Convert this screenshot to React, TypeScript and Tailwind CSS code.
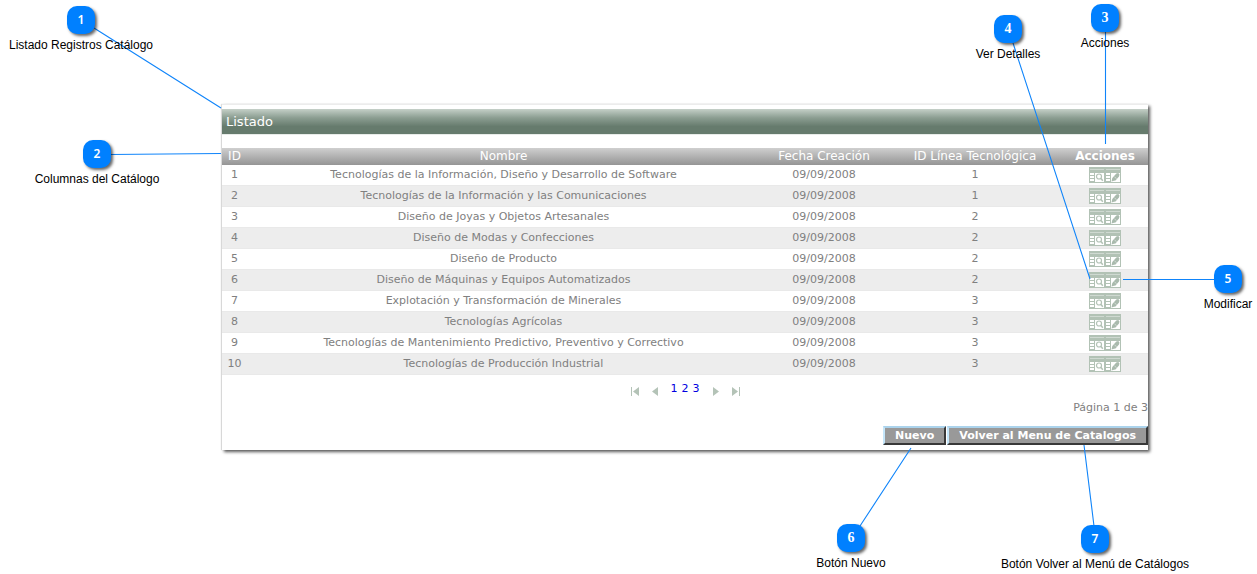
import React from "react";

type Row = { id: number; name: string; date: string; line: number };

const rows: Row[] = [
  { id: 1, name: "Tecnologías de la Información, Diseño y Desarrollo de Software", date: "09/09/2008", line: 1 },
  { id: 2, name: "Tecnologías de la Información y las Comunicaciones", date: "09/09/2008", line: 1 },
  { id: 3, name: "Diseño de Joyas y Objetos Artesanales", date: "09/09/2008", line: 2 },
  { id: 4, name: "Diseño de Modas y Confecciones", date: "09/09/2008", line: 2 },
  { id: 5, name: "Diseño de Producto", date: "09/09/2008", line: 2 },
  { id: 6, name: "Diseño de Máquinas y Equipos Automatizados", date: "09/09/2008", line: 2 },
  { id: 7, name: "Explotación y Transformación de Minerales", date: "09/09/2008", line: 3 },
  { id: 8, name: "Tecnologías Agrícolas", date: "09/09/2008", line: 3 },
  { id: 9, name: "Tecnologías de Mantenimiento Predictivo, Preventivo y Correctivo", date: "09/09/2008", line: 3 },
  { id: 10, name: "Tecnologías de Producción Industrial", date: "09/09/2008", line: 3 },
];

function GridIcon({ children }: { children: React.ReactNode }) {
  return (
    <svg width="16" height="16" viewBox="0 0 16 16" aria-hidden="true" className="block">
      <rect width="16" height="16" fill="#b2c2b5" />
      <rect x="1" y="2" width="14" height="1" fill="#cfd9d1" />
      <path d="M1 6h4v2H1zM1 9h4v2H1zM1 12h4v2H1zM6 6h9v9H6z" fill="#fff" />
      {children}
    </svg>
  );
}

function DetailIcon() {
  return (
    <GridIcon>
      <circle cx="10" cy="9.5" r="2.5" fill="none" stroke="#b2c2b5" strokeWidth="1.2" />
      <path d="M11.8 11.3l2 2.400" stroke="#b2c2b5" strokeWidth="1.500" />
    </GridIcon>
  );
}

function EditIcon() {
  return (
    <GridIcon>
      <path d="M6.500 14.500l.8-3.500 4-4.500 2-.5 1.200 1.500-.5 2-3.500 4-1.500.3z" fill="#a9baad" />
      <path d="M9.500 10l2 1.500" stroke="#e4eae5" strokeWidth=".7" />
    </GridIcon>
  );
}

type PagerKind = "first" | "prev" | "next" | "last";

const pagerPaths: Record<PagerKind, string> = {
  first: "M0 0h1v9H0zM8 0v9L2 4.500z",
  prev: "M7 0v9L1 4.500z",
  next: "M1 0v9l6-4.500z",
  last: "M0 0v9l6-4.500zM7 0h1v9H7z",
};

function PagerButton({ kind, label }: { kind: PagerKind; label: string }) {
  return (
    <button type="button" aria-label={label} className="mt-1 block">
      <svg width="8" height="9" viewBox="0 0 8 9" className="block">
        <path d={pagerPaths[kind]} fill="#b4c3b7" />
      </svg>
    </button>
  );
}

function Callout({ n, label, place, serif }: { n: number; label: string; place: string; serif?: boolean }) {
  return (
    <div className={`absolute flex w-60 -translate-x-1/2 flex-col items-center ${place}`}>
      <span
        className={`flex size-7 items-center justify-center rounded-[10px] bg-[#0080ff] text-white shadow-[2px_2px_3px_rgba(0,0,0,0.6)] ${
          serif ? "font-['Liberation_Serif',serif] text-sm font-bold" : "font-['Noto_Sans',sans-serif] text-xs font-semibold"
        }`}
      >
        {n}
      </span>
      <span className="mt-1 text-xs leading-[14px] whitespace-nowrap">{label}</span>
    </div>
  );
}

const buttonStyle =
  "h-[19px] border-2 border-t-[#abd3ec] border-l-[#c5e6fa] border-r-[#383838] border-b-[#383838] bg-[#999] px-2.5 text-[11px] leading-[15px] font-bold text-white";

const cell = "border-b border-[#e9e9e9] p-0";

export default function App() {
  return (
    <main className="relative min-h-[574px] overflow-hidden bg-white pt-[104px] pr-[109px] pb-[124px] pl-[222px] font-['Liberation_Sans',Arial,sans-serif] text-black">
      <section className="border-t border-[#ececec] bg-white pt-1 pb-[5px] font-['DejaVu_Sans',Verdana,sans-serif] text-[#808080] shadow-[2px_2px_3px_rgba(0,0,0,0.65),-1px_0_1px_rgba(0,0,0,0.12)]">
        <h1 className="h-[25px] bg-linear-to-b from-[#c5d0c8] via-[#8c9e92] via-35% to-[#667b6d] to-70% px-1 text-[13px] leading-[25px] text-white">
          Listado
        </h1>
        <div className="mb-[13px] h-px bg-[#e8ece9]" />
        <table className="w-full table-fixed border-separate border-spacing-0 text-center text-[11px]">
          <colgroup>
            <col className="w-[25px]" />
            <col />
            <col className="w-[128px]" />
            <col className="w-[174px]" />
            <col className="w-[86px]" />
          </colgroup>
          <thead>
            <tr className="h-[17px] bg-linear-to-b from-[#cfcfcf] to-[#959595] text-xs leading-[17px] text-white">
              <th className="p-0 font-normal">ID</th>
              <th className="p-0 font-normal">Nombre</th>
              <th className="p-0 font-normal">Fecha Creación</th>
              <th className="p-0 font-normal">ID Línea Tecnológica</th>
              <th className="p-0 font-bold">Acciones</th>
            </tr>
          </thead>
          <tbody>
            {rows.map((row) => (
              <tr key={row.id} className="h-[21px] leading-5 even:bg-[#ededed]">
                <td className={cell}>{row.id}</td>
                <td className={cell}>{row.name}</td>
                <td className={cell}>{row.date}</td>
                <td className={cell}>{row.line}</td>
                <td className={cell}>
                  <div className="flex justify-center">
                    <button type="button" aria-label={`Ver detalles ${row.id}`}>
                      <DetailIcon />
                    </button>
                    <button type="button" aria-label={`Modificar ${row.id}`}>
                      <EditIcon />
                    </button>
                  </div>
                </td>
              </tr>
            ))}
          </tbody>
        </table>
        <nav aria-label="Páginas" className="mt-1.5 flex items-center justify-center gap-3 text-[11px] leading-4">
          <PagerButton kind="first" label="Primera página" />
          <PagerButton kind="prev" label="Página anterior" />
          <span className="flex gap-1 text-[#0000e0]">
            <a href="#1">1</a>
            <a href="#2">2</a>
            <a href="#3">3</a>
          </span>
          <PagerButton kind="next" label="Página siguiente" />
          <PagerButton kind="last" label="Última página" />
        </nav>
        <p className="mt-[3px] text-right text-[11px] leading-4">Página 1 de 3</p>
        <div className="mt-[10px] flex justify-end gap-px">
          <button type="button" className={buttonStyle}>Nuevo</button>
          <button type="button" className={buttonStyle}>Volver al Menu de Catalogos</button>
        </div>
      </section>

      <svg className="pointer-events-none absolute top-0 left-0" width="1257" height="574" viewBox="0 0 1257 574" fill="none" stroke="#0f84fa" strokeWidth="1.1" aria-hidden="true">
        <path d="M94 28L221 108M110 154.500L221 153.500M1105.500 31V144M1013 43L1090 279M1123 279.500H1215M911 448L860 526M1084 445L1094 526" />
      </svg>

      <Callout n={1} label="Listado Registros Catálogo" place="left-[81px] top-[6px]" />
      <Callout n={2} label="Columnas del Catálogo" place="left-[97px] top-[140px]" />
      <Callout n={3} label="Acciones" place="left-[1105px] top-[4px]" serif />
      <Callout n={4} label="Ver Detalles" place="left-[1008px] top-[15px]" serif />
      <Callout n={5} label="Modificar" place="left-[1228px] top-[265px]" />
      <Callout n={6} label="Botón Nuevo" place="left-[851px] top-[524px]" serif />
      <Callout n={7} label="Botón Volver al Menú de Catálogos" place="left-[1095px] top-[525px]" />
    </main>
  );
}
